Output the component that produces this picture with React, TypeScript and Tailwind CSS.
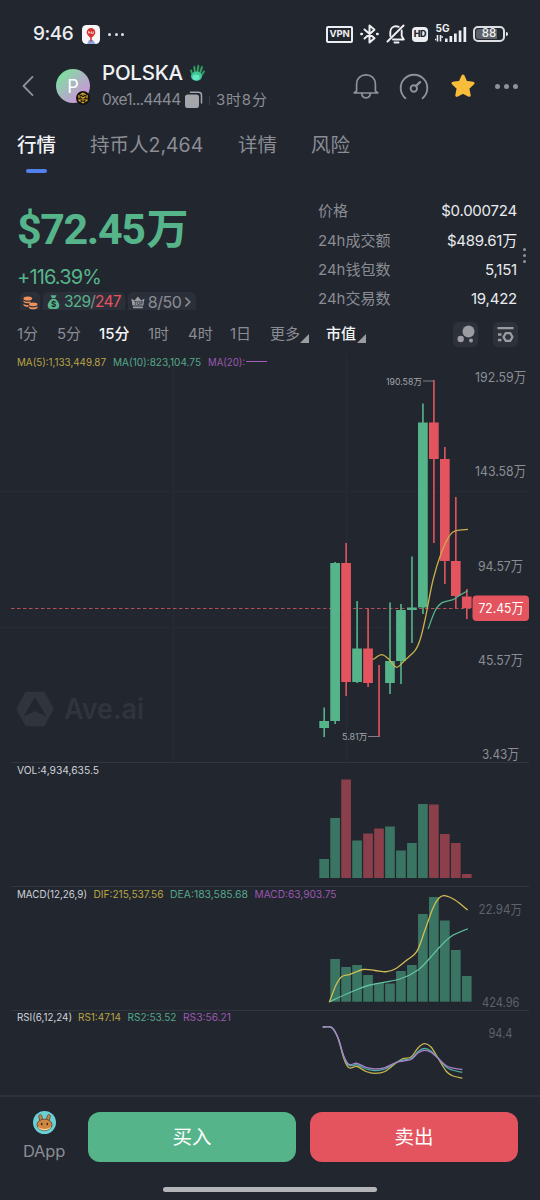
import type { ReactNode } from 'react';
import clsx from 'clsx';
import { ChevronRight } from 'lucide-react';

type Point = [number, number];

interface Candle {
  up: boolean;
  open: number;
  close: number;
  high: number;
  low: number;
  vol: number;
  macd?: number;
}

const GREEN = '#56b48a';
const RED = '#e3545f';
const YELLOW = '#b9a443';
const TEAL = '#55a888';
const PURPLE = '#9a58b0';

const PITCH = 10.97;
const FIRST_X = 324.2;

// y positions of each candle, plus the tops of its volume and MACD bars
const candles: Candle[] = [
  { up: true, open: 721, close: 728, high: 707.5, low: 737, vol: 859 },
  { up: true, open: 563, close: 721, high: 562, low: 724, vol: 818, macd: 959 },
  { up: false, open: 563, close: 682, high: 543, low: 696, vol: 779.5, macd: 967 },
  { up: true, open: 648.5, close: 682, high: 601, low: 683, vol: 840.5, macd: 965 },
  { up: false, open: 648.5, close: 683, high: 608.5, low: 687, vol: 833.5, macd: 975 },
  { up: false, open: 665, close: 665, high: 665, low: 737, vol: 828.5, macd: 983 },
  { up: true, open: 661, close: 683, high: 602.5, low: 694, vol: 826.5, macd: 983.5 },
  { up: true, open: 610, close: 661, high: 604, low: 684, vol: 850.5, macd: 971 },
  { up: true, open: 607.5, close: 610, high: 556.5, low: 643, vol: 843, macd: 965 },
  { up: true, open: 422.5, close: 607.5, high: 403.5, low: 614, vol: 804, macd: 914 },
  { up: false, open: 422.5, close: 459, high: 380, low: 543, vol: 804.5, macd: 897 },
  { up: false, open: 459, close: 561, high: 447, low: 584, vol: 834, macd: 920.5 },
  { up: false, open: 561, close: 596, high: 497, low: 608, vol: 843, macd: 950 },
  { up: false, open: 596.5, close: 608, high: 589, low: 619, vol: 874, macd: 976 },
];

const ma5: Point[] = [[373.3, 659.3], [381.7, 654.7], [389, 659.5], [396.7, 667.3], [405, 660], [415, 650.7], [420, 640], [425, 620], [433, 580], [441.7, 551.7], [450, 535], [455.7, 530.8], [467.5, 529.4]];
const ma10: Point[] = [[428.3, 628.5], [435, 611], [441.7, 602.9], [453, 599.6], [460, 595], [467.3, 591]];
const dif: Point[] = [[329.5, 1001.7], [336, 985], [341.7, 976.7], [350, 974.3], [363.3, 969.5], [375, 970.5], [386.7, 971.7], [396, 968.5], [407, 960], [416.7, 951.7], [425, 930], [433, 908], [439, 898], [444.5, 895.7], [455, 900], [467.3, 909.7]];
const dea: Point[] = [[329.5, 1001.7], [350, 992.5], [370, 985], [400, 979], [418, 970], [430, 958], [440, 946.7], [451.7, 936], [467.3, 929]];
const rsi1: Point[] = [[323.3, 1027], [331.7, 1027.5], [338, 1038], [344, 1059], [349, 1067.8], [357, 1066.5], [366, 1071.5], [375, 1073.3], [385, 1071.5], [396, 1063], [403, 1058.5], [411, 1057], [418, 1048], [424.5, 1043.7], [431, 1047], [438, 1058], [446, 1071], [452, 1075.5], [461.8, 1078.2]];
const rsi2: Point[] = [[323.3, 1027], [331.7, 1027.5], [338, 1038], [344, 1057.5], [349, 1065.5], [357, 1064.8], [366, 1069], [375, 1070.5], [385, 1069], [396, 1062.5], [403, 1060], [411, 1058.5], [418, 1051.5], [424.5, 1048.5], [431, 1051], [438, 1058], [446, 1067], [452, 1070], [461.8, 1072.2]];
const rsi3: Point[] = [[323.3, 1027], [331.7, 1027.5], [338, 1038], [344, 1056.5], [349, 1064.4], [357, 1063.3], [366, 1067.4], [375, 1068.8], [385, 1067.6], [396, 1062.5], [403, 1061], [411, 1059.5], [418, 1053], [424.5, 1050.3], [431, 1052.2], [438, 1058.3], [446, 1065.5], [452, 1067.8], [461.8, 1069.4]];

const smooth = (pts: Point[]) => {
  let d = `M${pts[0][0]} ${pts[0][1]}`;
  for (let i = 0; i < pts.length - 1; i++) {
    const p0 = pts[i - 1] ?? pts[i];
    const p1 = pts[i];
    const p2 = pts[i + 1];
    const p3 = pts[i + 2] ?? p2;
    d += ` C${p1[0] + (p2[0] - p0[0]) / 6} ${p1[1] + (p2[1] - p0[1]) / 6} ${p2[0] - (p3[0] - p1[0]) / 6} ${p2[1] - (p3[1] - p1[1]) / 6} ${p2[0]} ${p2[1]}`;
  }
  return d;
};

function Curve({ points, color }: { points: Point[]; color: string }) {
  return <path d={smooth(points)} fill="none" stroke={color} strokeWidth="1.3" strokeLinecap="round" />;
}

interface LabelProps {
  x: number;
  y: number;
  w: number;
  size?: number;
  fill?: string;
  children: ReactNode;
}

function Label({ x, y, w, size = 10.5, fill = '#d0d2d7', children }: LabelProps) {
  return (
    <text x={x} y={y} fontSize={size} fill={fill} textLength={w} lengthAdjust="spacingAndGlyphs">
      {children}
    </text>
  );
}

function StatusBar() {
  return (
    <div className="flex h-[60px] items-center pt-2 pl-[33px] pr-[32px]">
      <span className="mt-px w-[49px] text-[19px] font-medium tracking-[-0.5px] text-[#eceef1]">9:46</span>
      <svg className="h-[19px] w-[18px]" viewBox="0 0 18 19">
        <rect width="18" height="19" rx="4.5" fill="#f7f7f9" />
        <path d="M5 19l2-4h4l2.5 4z" fill="#8fa6dd" />
        <path d="M9 3a4.3 4.3 0 0 1 4.3 4.3c0 2.4-2 3.9-3.5 5.2l-.1 4H8.3l-.1-4C6.7 11.2 4.7 9.7 4.7 7.3A4.3 4.3 0 0 1 9 3z" fill="#d8322f" />
        <path d="M6.7 6v2.5M6.7 7.2h1.4v1.3M9.5 6.4v2h1.8v-2" fill="none" stroke="#fff" strokeWidth=".7" />
      </svg>
      <div className="ml-[8px] flex gap-[3.5px]">
        <i className="size-[3px] rounded-full bg-[#dfe1e5]" />
        <i className="size-[3px] rounded-full bg-[#dfe1e5]" />
        <i className="size-[3px] rounded-full bg-[#dfe1e5]" />
      </div>
      <div className="ml-auto flex items-center text-[#eceef1]">
        <span className="flex h-[17px] w-[27px] items-center justify-center rounded-[2px] border-2 border-[#eceef1] text-[9.5px] font-bold tracking-[-0.2px]">VPN</span>
        <svg className="ml-[7px] h-[20px] w-[19px]" viewBox="0 0 19 20" fill="none" stroke="currentColor" strokeWidth="2" strokeLinejoin="round" strokeLinecap="round">
          <path d="M4.5 5.5l10 8.8-5 4.2v-17l5 4.2-10 8.8" />
          <path d="M1.4 10h.4M17.2 10h.4" strokeWidth="2.6" />
        </svg>
        <svg className="ml-[7px] h-[20px] w-[20px]" viewBox="0 0 20 20" fill="none" stroke="currentColor" strokeWidth="1.9" strokeLinecap="round" strokeLinejoin="round">
          <path d="M17.5 1.5L1.5 17.5" strokeWidth="2" />
          <path d="M4.3 12V8c0-3.3 2.4-5.8 5.7-5.8 1 0 1.9.2 2.7.6M15.7 6.5V12l2.1 3.5H7" />
          <path d="M8.5 18.4h4" strokeWidth="2" />
        </svg>
        <span className="ml-[6px] flex h-[15px] w-[16px] items-center justify-center rounded-[4px] bg-[#eceef1] text-[9px] font-extrabold tracking-[-0.3px] text-[#22262f]">HD</span>
        <svg className="mb-[4px] ml-[7px] h-[24px] w-[32px]" viewBox="0 -4 32 24" fill="currentColor">
          <text x="0.5" y="8.4" fontSize="10" fontWeight="700" textLength="14" lengthAdjust="spacingAndGlyphs">5G</text>
          <path d="M10 14.5h2.6v3.5H10zM14.5 12h2.7v6h-2.7zM19 9.500h2.700V18H19zM23.700 6.500h2.700V18h-2.700zM28.500 3h2.700v15h-2.700z" />
          <path d="M2.500 11v6.500M0 15.500h1.200M5.500 11v6.500M6.500 13h1.500" stroke="currentColor" strokeWidth="1.600" />
        </svg>
        <span className="ml-[6px] flex h-[16px] w-[32px] items-center justify-center rounded-[5px] border-2 border-[#dcdee2] p-px">
          <span className="flex h-full w-full items-center justify-center rounded-[3px] bg-linear-to-r from-[#5e6168] from-82% to-transparent to-82% text-[11.5px] leading-none font-medium">88</span>
        </span>
        <i className="ml-px h-[4px] w-[2px] rounded-r bg-[#eceef1]" />
      </div>
    </div>
  );
}

function Header() {
  return (
    <div className="flex h-[52px] items-center pl-[22px] pr-[22px]">
      <svg className="h-[22px] w-[12px]" viewBox="0 0 12 22" fill="none" stroke="#8f9298" strokeWidth="1.8" strokeLinecap="round" strokeLinejoin="round">
        <path d="M10.5 1.8L1.5 11l9 9.2" />
      </svg>
      <div className="relative ml-[22px] flex size-[34px] items-center justify-center rounded-full bg-linear-to-br from-[#72e39a] from-10% via-[#a9b5c0] to-[#d783e6] text-[18px] text-white">
        P
        <svg className="absolute right-0 -bottom-[2px] size-[14px]" viewBox="0 0 14 14">
          <circle cx="7" cy="7" r="7" fill="#15120d" />
          <path d="M7 2.2l4 2.3v4.8L7 11.8 3 9.3V4.5z" fill="none" stroke="#d9a92e" strokeWidth="1.3" strokeDasharray="3.2 1" />
          <path d="M4.5 5.5L7 7l2.5-1.5M7 7v3M4.5 8l1 .7M9.5 8l-1 .7M7 2.5V5" stroke="#e0b032" strokeWidth="1.1" fill="none" />
        </svg>
      </div>
      <div className="ml-[12px] flex w-[180px] flex-col">
        <div className="flex h-[27px] items-center">
          <span className="w-[87px] text-[20.5px] font-medium tracking-[-0.25px] text-[#f0f1f4]">POLSKA</span>
          <svg className="h-[18px] w-[17px]" viewBox="0 0 17 18" strokeLinecap="round">
            <path d="M3.5 10.5L2 6.5M6 8.5L5.3 3M8.5 8L9.3 1.8M11 9l2-6M12 12l3-4.5" stroke="#175b45" strokeWidth="2.8" />
            <path d="M3.5 10.5L2 6.5M6 8.5L5.3 3M8.5 8L9.3 1.8M11 9l2-6M12 12l3-4.5" stroke="#4fa56a" strokeWidth="1.3" />
            <ellipse cx="7.5" cy="12.3" rx="5.5" ry="4.7" fill="#3fc79a" />
            <ellipse cx="7" cy="13.3" rx="3.5" ry="2.8" fill="#67e6c4" />
          </svg>
        </div>
        <div className="flex h-[26px] items-center pt-px text-[15.5px] text-[#8a8d94]">
          <span className="w-[83px] tracking-[-0.7px]">0xe1...4444</span>
          <svg className="mb-px h-[17px] w-[18px]" viewBox="0 0 18 17">
            <path d="M5.5 1.3h8a3 3 0 0 1 3 3V12" fill="none" stroke="#a4a6ab" strokeWidth="1.5" strokeLinecap="round" />
            <rect x="0" y="3.5" width="14" height="13.5" rx="2.8" fill="#a4a6ab" />
          </svg>
          <i className="mr-[6px] ml-[6px] h-[9px] w-px bg-[#3c4049]" />
          <span className="text-[15px] tracking-[0.8px]">3时8分</span>
        </div>
      </div>
      <div className="ml-auto flex items-center">
        <svg className="h-[27px] w-[26px]" viewBox="0 0 26 27" fill="none" stroke="#8f9298" strokeWidth="1.7" strokeLinecap="round" strokeLinejoin="round">
          <path d="M3.6 18V11c0-5.3 4-9.2 9.4-9.2s9.4 3.9 9.4 9.2v7l2.4 2H1.2l2.4-2" />
          <path d="M8.800 20.3c0 2.900 1.800 4.500 4.200 4.500s4.200-1.600 4.200-4.500" />
        </svg>
        <svg className="ml-[20px] h-[27px] w-[30px]" viewBox="0 0 30 27" fill="none" stroke="#8f9298" strokeWidth="1.9" strokeLinecap="round">
          <path d="M6.4 25.2a13.3 13.3 0 1 1 17.2 0" />
          <circle cx="14.8" cy="15.5" r="3.2" />
          <path d="M17 13l4-3.8" strokeWidth="2.4" />
        </svg>
        <svg className="ml-[21px] h-[26px] w-[26px]" viewBox="0 0 26 26" fill="#f9bd3c" stroke="#f9bd3c" strokeWidth="3" strokeLinejoin="round">
          <path d="M13 3l2.9 6.3 7.1.9-5.2 4.9 1.4 7.2L13 19.2l-6.2 3.1 1.4-7.2L3 10.2l7.1-.9z" />
        </svg>
        <div className="ml-[19px] flex gap-[4px]">
          <i className="size-[5px] rounded-full bg-[#8f9298]" />
          <i className="size-[5px] rounded-full bg-[#8f9298]" />
          <i className="size-[5px] rounded-full bg-[#8f9298]" />
        </div>
      </div>
    </div>
  );
}

const tabs = [
  { label: '行情', cls: 'w-[73px] text-[#f3f4f6] font-medium', active: true },
  { label: '持币人2,464', cls: 'w-[148px] text-[#8a8d94]' },
  { label: '详情', cls: 'w-[73px] text-[#8a8d94]' },
  { label: '风险', cls: 'w-[73px] text-[#8a8d94]' },
];

function Tabs() {
  return (
    <div className="flex h-[78px] pt-[19px] pl-[17px] text-[19.5px]">
      {tabs.map(tab => (
        <div key={tab.label} className={clsx('leading-[28px] whitespace-nowrap', tab.cls)}>
          {tab.label}
          {tab.active && <div className="mt-[10px] ml-[9px] h-[4px] w-[21px] rounded-full bg-[#5480ef]" />}
        </div>
      ))}
    </div>
  );
}

const stats = [
  ['价格', '$0.000724'],
  ['24h成交额', '$489.61万'],
  ['24h钱包数', '5,151'],
  ['24h交易数', '19,422'],
];

function Summary() {
  return (
    <div className="relative flex h-[128px] pr-[23px] pl-[17px]">
      <div className="w-[301px] pt-[14px]">
        <div className="flex h-[50px] items-center leading-none font-bold text-[#56b48a]">
          <span className="mt-px font-['Roboto'] text-[43px] tracking-[-1.4px]">$72.45</span>
          <span className="ml-[2px] text-[42px]">万</span>
        </div>
        <div className="mt-[9px] h-[28px] text-[20px] leading-[28px] tracking-[-0.85px] text-[#56b48a]">+116.39%</div>
        <div className="mt-px ml-[3px] flex h-[18px] gap-[3px] text-[16px] leading-[20px] text-[#8a8d94]">
          <div className="flex w-[20px] items-center justify-center rounded-t-[5px] bg-[#2b2f39]">
            <svg className="mt-1 h-[14px] w-[15px]" viewBox="0 0 15 14" fill="#f0925a">
              <ellipse cx="4.8" cy="2.5" rx="4.3" ry="2" />
              <path d="M.5 4.2c1 1.6 5 2 7 1v1.6c-2.5 1-6.3.5-7-1zM.5 7.6c1 1.4 3.5 1.7 5 1.4v1.7C3 11 .8 10.3.5 9z" />
              <ellipse cx="10.2" cy="8.3" rx="4.3" ry="1.9" />
              <path d="M5.9 10.2c1.5 1.6 7 1.6 8.6 0v1.6c-1.5 2-7.1 2-8.6 0z" />
            </svg>
          </div>
          <div className="flex w-[82px] items-center rounded-t-[5px] bg-[#2b2f39] pl-[4px]">
            <svg className="mt-[2px] h-[14px] w-[13px]" viewBox="0 0 13 14">
              <path d="M3.5.3h6L8 3.2H5zM4.7 3.9h3.6c2.7 1.9 4 4.5 4 6.6 0 2.5-1.5 3.5-3.3 3.5H4C2.2 14 .7 13 .7 10.5c0-2.1 1.3-4.7 4-6.6z" fill="#56b48a" />
              <text x="4" y="12" fontSize="8" fontWeight="700" fill="#22262f">$</text>
            </svg>
            <span className="mt-px ml-[4px] text-[15.5px] tracking-[-0.8px]">
              <span className="text-[#56b48a]">329</span>/<span className="text-[#e3545f]">247</span>
            </span>
          </div>
          <div className="flex w-[68px] items-center rounded-t-[5px] bg-[#2b2f39] pl-[3px]">
            <svg className="mt-[2px] h-[13px] w-[14px]" viewBox="0 0 14 13" fill="#9a9ca2">
              <path d="M.3 2.5l3.2 2L7 .3l3.5 4.2 3.2-2-1.2 7h-11zM2 10.6h10v1.8H2z" />
              <text x="3" y="8.7" fontSize="4.5" fontWeight="700" fill="#2b2f39">TOP</text>
            </svg>
            <span className="mt-px ml-[3px] tracking-[-0.5px]">8/50</span>
            <ChevronRight className="mt-[2px] -ml-[1px] size-[16px]" strokeWidth={2.5} />
          </div>
        </div>
      </div>
      <div className="flex-1 pt-[7px]">
        {stats.map(([name, value]) => (
          <div key={name} className="flex h-[29.3px] items-center justify-between text-[15px]">
            <span className="text-[#8a8d94]">{name}</span>
            <span className="tracking-[-0.22px] text-[#e9ebee]">{value}</span>
          </div>
        ))}
      </div>
      <div className="absolute top-[58px] right-[14px] flex flex-col gap-[3px]">
        <i className="size-[3px] rounded-full bg-[#8f9298]" />
        <i className="size-[3px] rounded-full bg-[#8f9298]" />
        <i className="size-[3px] rounded-full bg-[#8f9298]" />
      </div>
    </div>
  );
}

const intervals = [
  { label: '1分', cls: 'w-[40px]' },
  { label: '5分', cls: 'w-[42px]' },
  { label: '15分', cls: 'w-[49px] font-medium text-[#f3f4f6]' },
  { label: '1时', cls: 'w-[40px]' },
  { label: '4时', cls: 'w-[42px]' },
  { label: '1日', cls: 'w-[40px]' },
];

function Corner() {
  return (
    <svg className="mt-[8px] size-[9px]" viewBox="0 0 9 9" fill="#9a9ca2">
      <path d="M9 0v9H0z" />
    </svg>
  );
}

function Intervals() {
  return (
    <div className="flex h-[33px] items-center pr-[22px] pb-px pl-[17px] text-[15px] text-[#8a8d94]">
      {intervals.map(item => (
        <span key={item.label} className={item.cls}>{item.label}</span>
      ))}
      <span className="flex w-[56px] items-center">更多<Corner /></span>
      <span className="flex items-center gap-px font-medium text-[#f3f4f6]">市值<Corner /></span>
      <div className="ml-auto flex gap-[15px]">
        <span className="flex size-[25px] items-center justify-center rounded-[5px] bg-[#2d313a]">
          <svg className="size-[18px]" viewBox="0 0 18 18" fill="#9a9ca2">
            <circle cx="11.5" cy="6.5" r="6" />
            <circle cx="3.7" cy="14" r="3.2" />
            <circle cx="14" cy="15.5" r="2" />
          </svg>
        </span>
        <span className="flex size-[25px] items-center justify-center rounded-[5px] bg-[#2d313a]">
          <svg className="size-[17px]" viewBox="0 0 17 17" fill="none" stroke="#9a9ca2" strokeWidth="2.3">
            <path d="M.5 2.2h16M1 8.500h3.500M1 14h3.500" />
            <path d="M8.800 7.200h4.400l2.300 3.800-2.300 3.800H8.800L6.500 11z" strokeLinejoin="round" />
          </svg>
        </span>
      </div>
    </div>
  );
}

function PricePanel() {
  return (
    <svg className="block h-[411px] w-full" viewBox="0 351 540 411">
      <path d="M173.5 355V762M346.5 355V762M0 491.5H529M0 627.5H529" stroke="#272b34" />
      <Label x={17} y={366} w={89} fill={YELLOW}>MA(5):1,133,449.87</Label>
      <Label x={113} y={366} w={88} fill={TEAL}>MA(10):823,104.75</Label>
      <Label x={208} y={366} w={37} fill={PURPLE}>MA(20):</Label>
      <path d="M246 361.5h21" stroke="#a45cbb" />

      {/* watermark */}
      <path d="M26 692.5h18l9 16.5-9 16.5H26L17 709z" fill="#30343d" stroke="#30343d" strokeWidth="1.5" strokeLinejoin="round" />
      <path d="M35 697l11.5 19.5L35 711l-11.5 5.5z" fill="#22262f" />
      <text x="64" y="719" fontSize="28" fontWeight="600" fill="#30343d" textLength="80" lengthAdjust="spacingAndGlyphs">Ave.ai</text>

      <path d="M11 608.5H472" stroke="#b64f5a" strokeDasharray="3.5 2.5" />
      {candles.map((c, i) => {
        const x = FIRST_X + i * PITCH;
        return (
          <g key={i} fill={c.up ? GREEN : RED}>
            <rect x={x - 0.8} y={c.high} width={1.6} height={c.low - c.high} />
            <rect x={x - 4.9} y={c.open} width={9.7} height={c.close - c.open} />
          </g>
        );
      })}
      <Curve points={ma5} color="#c8b04a" />
      <Curve points={ma10} color={GREEN} />

      <Label x={386} y={384.5} w={36} size={9.5} fill="#a3a6ac">190.58万</Label>
      <path d="M423 381h11M368 736.5h11" stroke="#7d8087" />
      <Label x={342} y={740} w={25.5} size={9.5} fill="#a3a6ac">5.81万</Label>

      <Label x={475} y={382} w={51} size={13.5} fill="#8a8d94">192.59万</Label>
      <Label x={475} y={476} w={51} size={13.5} fill="#8a8d94">143.58万</Label>
      <Label x={478} y={571} w={45} size={13.5} fill="#8a8d94">94.57万</Label>
      <Label x={478} y={665} w={45} size={13.5} fill="#8a8d94">45.57万</Label>
      <Label x={482} y={759} w={37} size={13.5} fill="#8a8d94">3.43万</Label>
      <rect x="472.5" y="595.5" width="56.5" height="25.5" rx="4" fill={RED} />
      <Label x={478.5} y={613} w={45} size={13.5} fill="#fff">72.45万</Label>
    </svg>
  );
}

function VolumePanel() {
  return (
    <svg className="block h-[124px] w-full" viewBox="0 762 540 124">
      <path d="M11 762.5H529" stroke="#31353e" />
      <Label x={17} y={774} w={82}>VOL:4,934,635.5</Label>
      {candles.map((c, i) => (
        <rect key={i} x={FIRST_X + i * PITCH - 4.9} y={c.vol} width={9.7} height={878 - c.vol} fill={c.up ? '#3a7462' : '#8a3f4b'} />
      ))}
    </svg>
  );
}

function MacdPanel() {
  return (
    <svg className="block h-[124px] w-full" viewBox="0 886 540 124">
      <path d="M11 886.5H529" stroke="#31353e" />
      <Label x={17} y={897.5} w={70}>MACD(12,26,9)</Label>
      <Label x={93.5} y={897.5} w={70} fill={YELLOW}>DIF:215,537.56</Label>
      <Label x={170} y={897.5} w={78} fill={TEAL}>DEA:183,585.68</Label>
      <Label x={254.5} y={897.5} w={82} fill={PURPLE}>MACD:63,903.75</Label>
      {candles.map((c, i) => c.macd && (
        <rect key={i} x={FIRST_X + i * PITCH - 4.9} y={c.macd} width={9.7} height={1001.7 - c.macd} fill="#3a7462" />
      ))}
      <Curve points={dea} color="#63c3a0" />
      <Curve points={dif} color="#d0bd54" />
      <Label x={478.5} y={914} w={43.5} size={13} fill="#5f6269">22.94万</Label>
      <Label x={482} y={1006.5} w={37.5} size={13} fill="#5f6269">424.96</Label>
    </svg>
  );
}

function RsiPanel() {
  return (
    <svg className="block h-[85px] w-full" viewBox="0 1010 540 85">
      <path d="M11 1010H529" stroke="#31353e" strokeWidth="2" />
      <Label x={17} y={1021} w={55}>RSI(6,12,24)</Label>
      <Label x={78} y={1021} w={43} fill={YELLOW}>RS1:47.14</Label>
      <Label x={127.5} y={1021} w={49} fill={TEAL}>RS2:53.52</Label>
      <Label x={183} y={1021} w={48} fill={PURPLE}>RS3:56.21</Label>
      <Curve points={rsi1} color="#c8b450" />
      <Curve points={rsi2} color="#4fae9c" />
      <Curve points={rsi3} color="#ab80cf" />
      <Label x={488.5} y={1037.5} w={24} size={13} fill="#5f6269">94.4</Label>
    </svg>
  );
}

function ActionBar() {
  return (
    <div className="flex h-[105px] flex-col items-center border-t-2 border-[#2d3139]">
      <div className="flex w-full pt-[15px] pr-[22px]">
        <div className="flex w-[88px] flex-col items-center text-[16.5px] tracking-[-0.2px] text-[#8a8d94]">
          <svg className="-mt-px size-[23px]" viewBox="0 0 23 23">
            <circle cx="11.5" cy="11.5" r="11.5" fill="#69d0d6" />
            <g stroke="#5b3d2d" strokeWidth=".8">
              <path d="M7 10.5L5.8 5.8c-.5-2.5 2.5-3 3-.7l.7 3.6h4l.7-3.6c.5-2.3 3.5-1.8 3 .7L16 10.5z" fill="#cf8640" />
              <ellipse cx="11.5" cy="13.8" rx="7.5" ry="5.7" fill="#cf8640" />
            </g>
            <path d="M5 15.5c2 3.3 11 3.3 13 0-1 5-12 5-13 0z" fill="#f6d9a0" />
            <ellipse cx="8.7" cy="13" rx=".8" ry="1.2" fill="#3d2a22" />
            <ellipse cx="14.3" cy="13" rx=".8" ry="1.2" fill="#3d2a22" />
          </svg>
          <span className="mt-[5px] leading-[24px]">DApp</span>
        </div>
        <button className="h-[50px] flex-1 rounded-[12px] bg-[#56b48a] pt-px text-[19.5px] text-white">买入</button>
        <button className="ml-[14px] h-[50px] flex-1 rounded-[12px] bg-[#e3545f] pt-px text-[19.5px] text-white">卖出</button>
      </div>
      <div className="mt-auto mb-[8px] h-[5px] w-[214px] rounded-full bg-[#b3b5b9]" />
    </div>
  );
}

export default function App() {
  return (
    <div className="h-[1200px] w-[540px] overflow-hidden bg-[#22262f] font-['Inter','Noto_Sans_CJK_SC',sans-serif]">
      <StatusBar />
      <Header />
      <Tabs />
      <Summary />
      <Intervals />
      <PricePanel />
      <VolumePanel />
      <MacdPanel />
      <RsiPanel />
      <ActionBar />
    </div>
  );
}
